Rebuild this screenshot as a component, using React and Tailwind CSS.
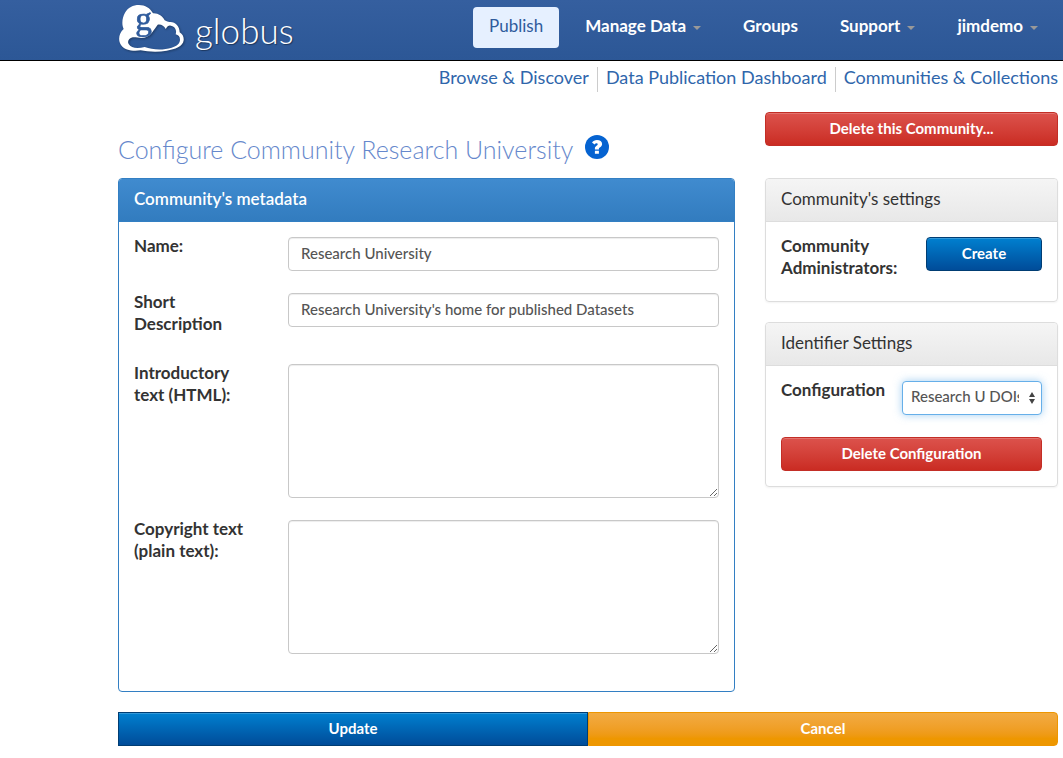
import React from "react";

const buttonBase =
  "block h-[34px] w-full border px-3 pb-[3px] text-center text-[15px] leading-5 font-bold text-white";
const blueButton =
  "border-[#003d73] bg-linear-to-b from-[#0080d0] to-[#004c99] shadow-[inset_0_1px_0_rgba(255,255,255,0.2)]";
const redButton =
  "rounded border-[#c32e26] bg-linear-to-b from-[#dc524c] to-[#ca2b22] shadow-[inset_0_1px_0_rgba(255,255,255,0.2)]";
const fieldBase =
  "mt-[2px] block w-full rounded border border-[#c8c8c8] bg-white px-3 text-[15px] font-medium text-[#555] shadow-[inset_0_1px_1px_rgba(0,0,0,0.075)]";

function Logo() {
  return (
    <a href="#home" className="flex items-start text-white" aria-label="globus">
      <svg viewBox="54 0 204 162" className="h-[54px] w-[68px] drop-shadow-[1px_1px_1px_rgba(0,0,0,0.35)]">
        <path
          fill="#fff"
          fillRule="evenodd"
          d="M71 87C64 73 67 51 75 38C84 23 99 15 117 15C136 15 150 24 159 40C174 39 188 48 194 61C201 65 204 66 208 66C225 64 239 78 239 97C248 103 252 111 251 121C249 140 225 148 200 152C174 157 142 155 122 151C100 155 74 151 63 135C53 120 57 99 71 87ZM164 87C157 96 153 105 141 110C126 118 108 110 98 112C87 115 81 124 86 132C93 145 113 146 134 141C158 150 190 151 215 143C231 138 240 130 240 119C240 110 235 105 227 103C231 91 225 78 212 77C206 76 202 79 197 87C192 77 183 72 173 74Z"
        />
        <text
          x="106"
          y="90"
          fontSize="100"
          fill="#2f5b9c"
          stroke="#2f5b9c"
          strokeWidth="2"
          fontFamily="Liberation Serif, serif"
        >
          g
        </text>
      </svg>
      <span className="mt-[10px] ml-[9px] text-[35px] leading-[40px] font-light [text-shadow:1px_1px_1px_rgba(0,0,0,0.4)]">
        globus
      </span>
    </a>
  );
}

function NavItem({ children, active, caret }) {
  return (
    <a
      href="#nav"
      className={
        active
          ? "flex h-[41px] items-center rounded bg-[#e6f0ff] px-4 pb-[3px] text-[#2f5b9c]"
          : "flex h-[41px] items-center px-4 pb-[3px] font-bold text-white"
      }
    >
      {children}
      {caret && (
        <svg viewBox="0 0 8 4" className="mt-1 ml-[7px] h-1 w-2" fill="#999">
          <path d="M0 0h8L4 4z" />
        </svg>
      )}
    </a>
  );
}

function SidePanel({ title, children }) {
  return (
    <section className="rounded border border-[#ddd] shadow-[0_1px_2px_rgba(0,0,0,0.05)]">
      <h2 className="rounded-t border-b border-[#ddd] bg-linear-to-b from-[#f5f5f5] to-[#e8e8e8] px-[15px] pt-[9px] pb-[11px] text-[17px] leading-[22px]">
        {title}
      </h2>
      <div className="px-[15px] pt-[13px] pb-[15px]">{children}</div>
    </section>
  );
}

function FormRow({ id, label, children }) {
  return (
    <div className="mb-5 grid grid-cols-[154px_1fr] items-start">
      <label htmlFor={id} className="mb-[7px] pr-8 text-[17px] leading-[22px] font-bold">
        {label}
      </label>
      {children}
    </div>
  );
}

export default function App() {
  return (
    <div className="bg-white font-[Lato,sans-serif] text-[17px] text-[#333]">
      <header className="flex h-[61px] items-start justify-between border-b border-black bg-linear-to-b from-[#355f9f] to-[#2c5796] pr-[9px] pl-[118px]">
        <Logo />
        <nav className="mt-[7px] flex gap-2.5 text-[17px] whitespace-nowrap">
          <NavItem active>Publish</NavItem>
          <NavItem caret>Manage Data</NavItem>
          <NavItem>Groups</NavItem>
          <NavItem caret>Support</NavItem>
          <NavItem caret>jimdemo</NavItem>
        </nav>
      </header>

      <nav className="mt-[6px] flex h-[25px] justify-end divide-x divide-[#ccc] pr-[5px] text-lg leading-5 whitespace-nowrap text-[#2f66ab]">
        <a href="#browse" className="pr-2">Browse &amp; Discover</a>
        <a href="#dashboard" className="px-2">Data Publication Dashboard</a>
        <a href="#communities" className="pl-2">Communities &amp; Collections</a>
      </nav>

      <form className="mt-5 pr-[5px] pb-3 pl-[118px]" onSubmit={(e) => e.preventDefault()}>
        <div className="grid grid-cols-[617fr_293fr] items-start gap-x-[30px]">
          <main>
            <div className="flex h-[66px] items-center gap-3 pt-2">
              <h1 className="text-[25px] leading-8 font-light whitespace-nowrap text-[#6688cc]">
                Configure Community Research University
              </h1>
              <a href="#help" aria-label="Help" className="mb-1">
                <svg viewBox="0 0 24 24" className="size-6">
                  <circle cx="12" cy="12" r="12" fill="#0563d1" />
                  <path
                    d="M9.9 14.6V13.3C9.9 11.1 12.7 10.8 12.7 9.3C12.7 8.6 12.2 8.3 11.5 8.3C10.7 8.3 10.1 8.8 9.6 9.5L7 7.5C8.1 5.8 9.7 4.9 12 4.9C14.9 4.9 17.1 6.4 17.1 8.9C17.1 12 13.9 12.2 13.9 13.7V14.6ZM9.9 15.8H13.9V18.8H9.9Z"
                    fill="#fff"
                  />
                </svg>
              </a>
            </div>
            <section className="rounded border border-[#337fc3]">
              <h2 className="rounded-t-[3px] border-b border-[#337fc3] bg-linear-to-b from-[#408bcf] to-[#327cbf] px-[15px] pt-[9px] pb-[11px] text-[17px] leading-[22px] font-semibold text-white">
                Community's metadata
              </h2>
              <div className="px-[15px] pt-[13px] pb-[17px]">
                <FormRow id="name" label="Name:">
                  <input id="name" className={`${fieldBase} h-[34px] pb-[3px]`} defaultValue="Research University" />
                </FormRow>
                <FormRow id="short" label="Short Description">
                  <input
                    id="short"
                    className={`${fieldBase} h-[34px] pb-[3px]`}
                    defaultValue="Research University's home for published Datasets"
                  />
                </FormRow>
                <FormRow id="intro" label="Introductory text (HTML):">
                  <textarea id="intro" className={`${fieldBase} h-[134px] py-1.5`} />
                </FormRow>
                <FormRow id="copyright" label="Copyright text (plain text):">
                  <textarea id="copyright" className={`${fieldBase} h-[134px] py-1.5`} />
                </FormRow>
              </div>
            </section>
          </main>

          <aside>
            <button type="button" className={`${buttonBase} ${redButton} mb-8`}>
              Delete this Community...
            </button>
            <SidePanel title="Community's settings">
              <div className="flex items-start justify-between">
                <p id="admins" className="mb-[7px] w-[130px] leading-[22px] font-bold">
                  Community Administrators:
                </p>
                <div className="mt-[2px] w-[116px]">
                  <button type="button" aria-describedby="admins" className={`${buttonBase} ${blueButton} rounded`}>
                    Create
                  </button>
                </div>
              </div>
            </SidePanel>
            <div className="h-5" />
            <SidePanel title="Identifier Settings">
              <div className="mb-[22px] flex items-start justify-between">
                <label htmlFor="config" className="leading-[22px] font-bold">
                  Configuration
                </label>
                <div className="relative mt-[2px] w-[140px]">
                  <select
                    id="config"
                    className="block h-[34px] w-full appearance-none rounded border border-[#66afe9] bg-white pr-[22px] pb-[3px] pl-2 text-[15px] font-medium text-[#555] shadow-[0_0_8px_rgba(102,175,233,0.6)] outline-none"
                  >
                    <option>Research U DOIs</option>
                  </select>
                  <svg viewBox="0 0 6 12" className="pointer-events-none absolute top-[11px] right-[7px] h-3 w-1.5" fill="#444">
                    <path d="M0 5L3 0L6 5ZM0 7H6L3 12Z" />
                  </svg>
                </div>
              </div>
              <button type="button" className={`${buttonBase} ${redButton}`}>
                Delete Configuration
              </button>
            </SidePanel>
          </aside>
        </div>

        <div className="mt-5 grid grid-cols-2">
          <button type="submit" className={`${buttonBase} ${blueButton}`}>
            Update
          </button>
          <button
            type="button"
            className={`${buttonBase} rounded-r border-[#ee9600] bg-linear-to-b from-[#f2ab42] to-[#ee9700] to-80%`}
          >
            Cancel
          </button>
        </div>
      </form>
    </div>
  );
}
